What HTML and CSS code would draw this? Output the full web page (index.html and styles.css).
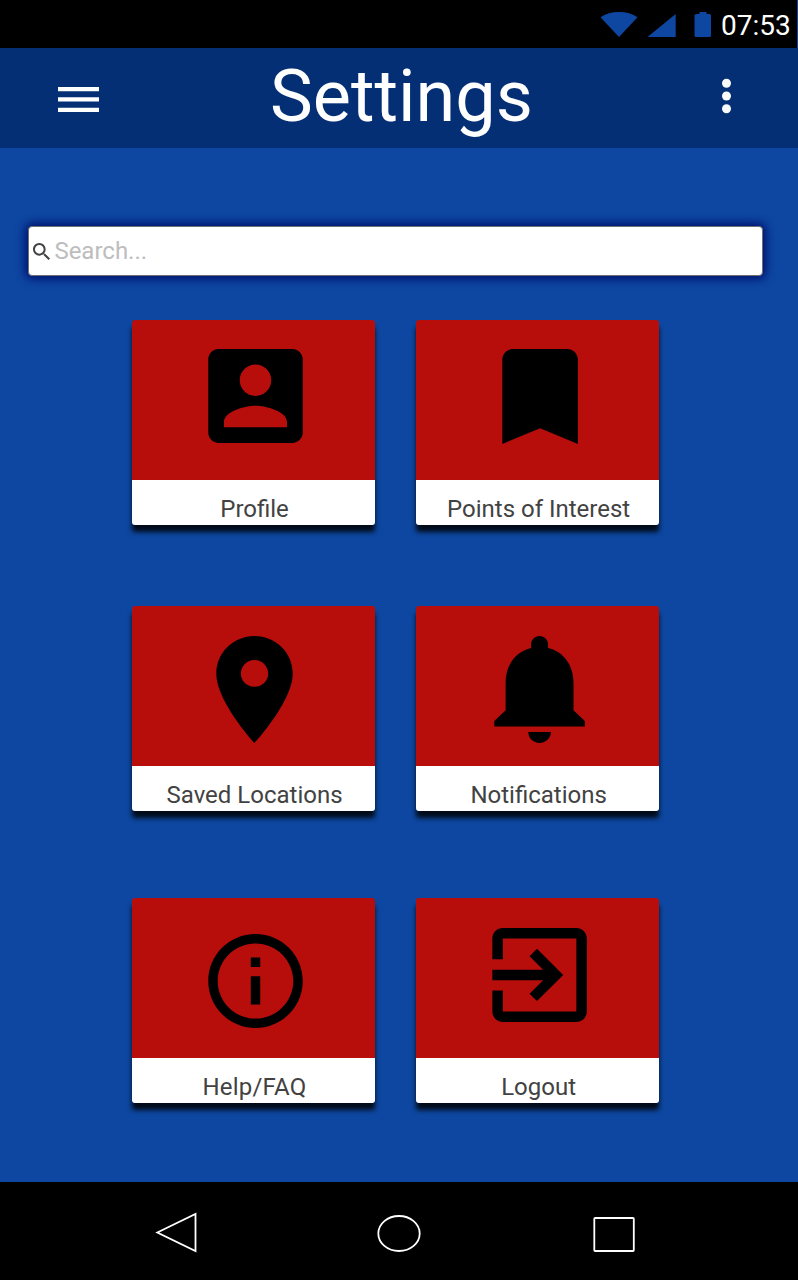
FILE: index.html
```html
<!DOCTYPE html>
<html lang="en">
<head>
<meta charset="utf-8">
<title>Settings</title>
<link rel="stylesheet" href="styles.css">
</head>
<body>
<div class="screen">
  <div class="status">
    <svg class="status-icons" viewBox="0 0 120 48" width="120" height="48">
      <path d="M0.5 17.3Q8 12 19 12Q30 12 37.5 17.3L19 37Z"/>
      <path d="M47.5 37L75.700 14V37Z"/>
      <path d="M96.500 14H99.500V12H106.500V14H109.500Q111 14 111 15.500V35.500Q111 37 109.500 37H96Q94.500 37 94.500 35.500V15.500Q94.500 14 96.500 14Z"/>
    </svg>
    <span class="clock">07:53</span>
  </div>
  <header class="appbar">
    <button class="menu" aria-label="Menu">
      <svg viewBox="0 0 41 25" width="41" height="25"><path d="M0 0H41V4.300H0ZM0 10.300H41V14.600H0ZM0 20.700H41V25H0Z"/></svg>
    </button>
    <h1 class="title">Settings</h1>
    <button class="more" aria-label="More">
      <svg viewBox="0 0 10 36" width="10" height="36"><circle cx="4.500" cy="5.300" r="4.500"/><circle cx="4.500" cy="18" r="4.500"/><circle cx="4.500" cy="30.700" r="4.500"/></svg>
    </button>
  </header>
  <main class="content">
    <div class="search">
      <svg class="search-icon" viewBox="3 3 17.500 17.500" width="17" height="17"><path d="M15.500 14h-.79l-.28-.27C15.410 12.590 16 11.110 16 9.500 16 5.910 13.090 3 9.500 3S3 5.910 3 9.500 5.910 16 9.500 16c1.610 0 3.090-.59 4.230-1.570l.27.28v.79l5 4.990L20.490 19l-4.990-5zm-6 0C7.010 14 5 11.990 5 9.500S7.010 5 9.500 5 14 7.010 14 9.500 11.990 14 9.500 14z"/></svg>
      <span>Search...</span>
    </div>
    <div class="cards">
      <a class="card">
        <svg class="art" viewBox="0 0 242.500 160"><path transform="translate(60.500 13.300) scale(5.250 5.220)" d="M3 5v14c0 1.100.89 2 2 2h14c1.100 0 2-.9 2-2V5c0-1.100-.9-2-2-2H5c-1.110 0-2 .9-2 2zm12 4c0 1.660-1.340 3-3 3s-3-1.340-3-3 1.340-3 3-3 3 1.340 3 3zm-9 8c0-2 4-3.100 6-3.100s6 1.100 6 3.100v1H6v-1z"/></svg>
        <span class="label">Profile</span>
      </a>
      <a class="card">
        <svg class="art" viewBox="0 0 242.500 160"><path transform="translate(59.300 13.300) scale(5.400 5.270)" d="M17 3H7c-1.100 0-2 .9-2 2v16l7-3 7 3V5c0-1.100-.9-2-2-2z"/></svg>
        <span class="label">Points of Interest</span>
      </a>
      <a class="card">
        <svg class="art" viewBox="0 0 242.500 160"><path transform="translate(57 19.300) scale(5.460 5.350)" d="M12 2C8.130 2 5 5.130 5 9c0 5.250 7 13 7 13s7-7.750 7-13c0-3.870-3.130-7-7-7zm0 9.500c-1.380 0-2.500-1.120-2.500-2.500s1.120-2.500 2.500-2.500 2.500 1.120 2.500 2.500-1.120 2.500-2.500 2.500z"/></svg>
        <span class="label">Saved Locations</span>
      </a>
      <a class="card">
        <svg class="art" viewBox="0 0 242.500 160"><path transform="translate(55.700 16.300) scale(5.656 5.490)" d="M12 22c1.100 0 2-.9 2-2h-4c0 1.100.89 2 2 2zm6-6v-5c0-3.070-1.640-5.640-4.500-6.320V4c0-.83-.67-1.500-1.500-1.500s-1.500.67-1.500 1.500v.68C7.630 5.360 6 7.920 6 11v5l-2 2v1h16v-1l-2-2z"/></svg>
        <span class="label">Notifications</span>
      </a>
      <a class="card">
        <svg class="art" viewBox="0 0 242.500 160"><path transform="translate(66.800 26.600) scale(4.725 4.700)" d="M11 17h2v-6h-2v6zm1-15C6.480 2 2 6.480 2 12s4.480 10 10 10 10-4.480 10-10S17.520 2 12 2zm0 18c-4.410 0-8-3.590-8-8s3.590-8 8-8 8 3.590 8 8-3.590 8-8 8zM11 9h2V7h-2v2z"/></svg>
        <span class="label label-help">Help/FAQ</span>
      </a>
      <a class="card">
        <svg class="art" viewBox="0 0 242.500 160"><path transform="translate(60.600 14.300) scale(5.250 5.220)" d="M10.090 15.590L11.500 17l5-5-5-5-1.410 1.410L12.670 11H3v2h9.670l-2.580 2.590zM19 3H5c-1.110 0-2 .9-2 2v4h2V5h14v14H5v-4H3v4c0 1.100.89 2 2 2h14c1.100 0 2-.9 2-2V5c0-1.100-.9-2-2-2z"/></svg>
        <span class="label">Logout</span>
      </a>
    </div>
  </main>
  <nav class="navbar">
    <svg viewBox="0 0 798 98" width="798" height="98">
      <path d="M157.300 50.500L195.500 32V69Z"/>
      <ellipse cx="399" cy="51.500" rx="20.700" ry="17.500"/>
      <rect x="594.300" y="36" width="39.500" height="33" rx="0.800"/>
    </svg>
  </nav>
</div>
</body>
</html>
```
FILE: styles.css
```css
* { box-sizing: border-box; }
body { margin: 0; background: #0d47a1; font-family: Roboto, "Liberation Sans", sans-serif; }
svg { display: block; }
button { border: 0; padding: 0; background: none; }
.screen { width: 798px; height: 1280px; display: flex; flex-direction: column; overflow: hidden; }

.status { height: 48px; width: 797px; background: #000; display: flex; justify-content: flex-end; align-items: center; padding-right: 7px; }
.status-icons { fill: #0d47a1; flex: none; }
.clock { color: #fff; font-size: 28px; line-height: 46px; padding: 4px 0 0 1px; width: 70px; white-space: nowrap; }

.appbar { height: 100px; background: #042f75; display: flex; justify-content: space-between; align-items: center; padding: 0 66px 0 58px; }
.menu { fill: #fff; padding-top: 3px; }
.more { fill: #fafafa; padding-bottom: 4px; }
.title { margin: 0 18px 0 0; color: #fff; font-weight: 400; font-size: 72px; line-height: 98px; padding-bottom: 2px; white-space: nowrap; }

.content { flex: 1; padding: 78px 34px 0 28.400px; }
.search { height: 50px; width: 735px; background: #fff; border: 1px solid #707070; border-radius: 4px; box-shadow: 0 0 10px 3px #00106e; display: flex; align-items: center; gap: 4px; padding-left: 4px; color: #bdbdbd; font-size: 24px; }
.search-icon { fill: #424242; }

.cards { display: grid; grid-template-columns: 242.500px 242.500px; grid-template-rows: 205px 205px 205px; column-gap: 41.600px; row-gap: 81px; padding: 44px 0 0 103.900px; }
.card { background: linear-gradient(#b70e0c 160px, #fff 160px); border-radius: 3px; box-shadow: 0 7px 5px rgba(0, 0, 0, .85); display: flex; flex-direction: column; }
.card:nth-child(n+5) { margin-top: 6px; height: 205px; }
.art { width: 100%; height: 160px; }
.label { color: #424242; font-size: 24px; line-height: 28px; padding: 15px 0 0 2px; text-align: center; white-space: nowrap; }
.label-help { letter-spacing: .2px; }

.navbar { height: 98px; background: #000; }
.navbar svg { fill: none; stroke: #fff; stroke-width: 1.800; }
```
